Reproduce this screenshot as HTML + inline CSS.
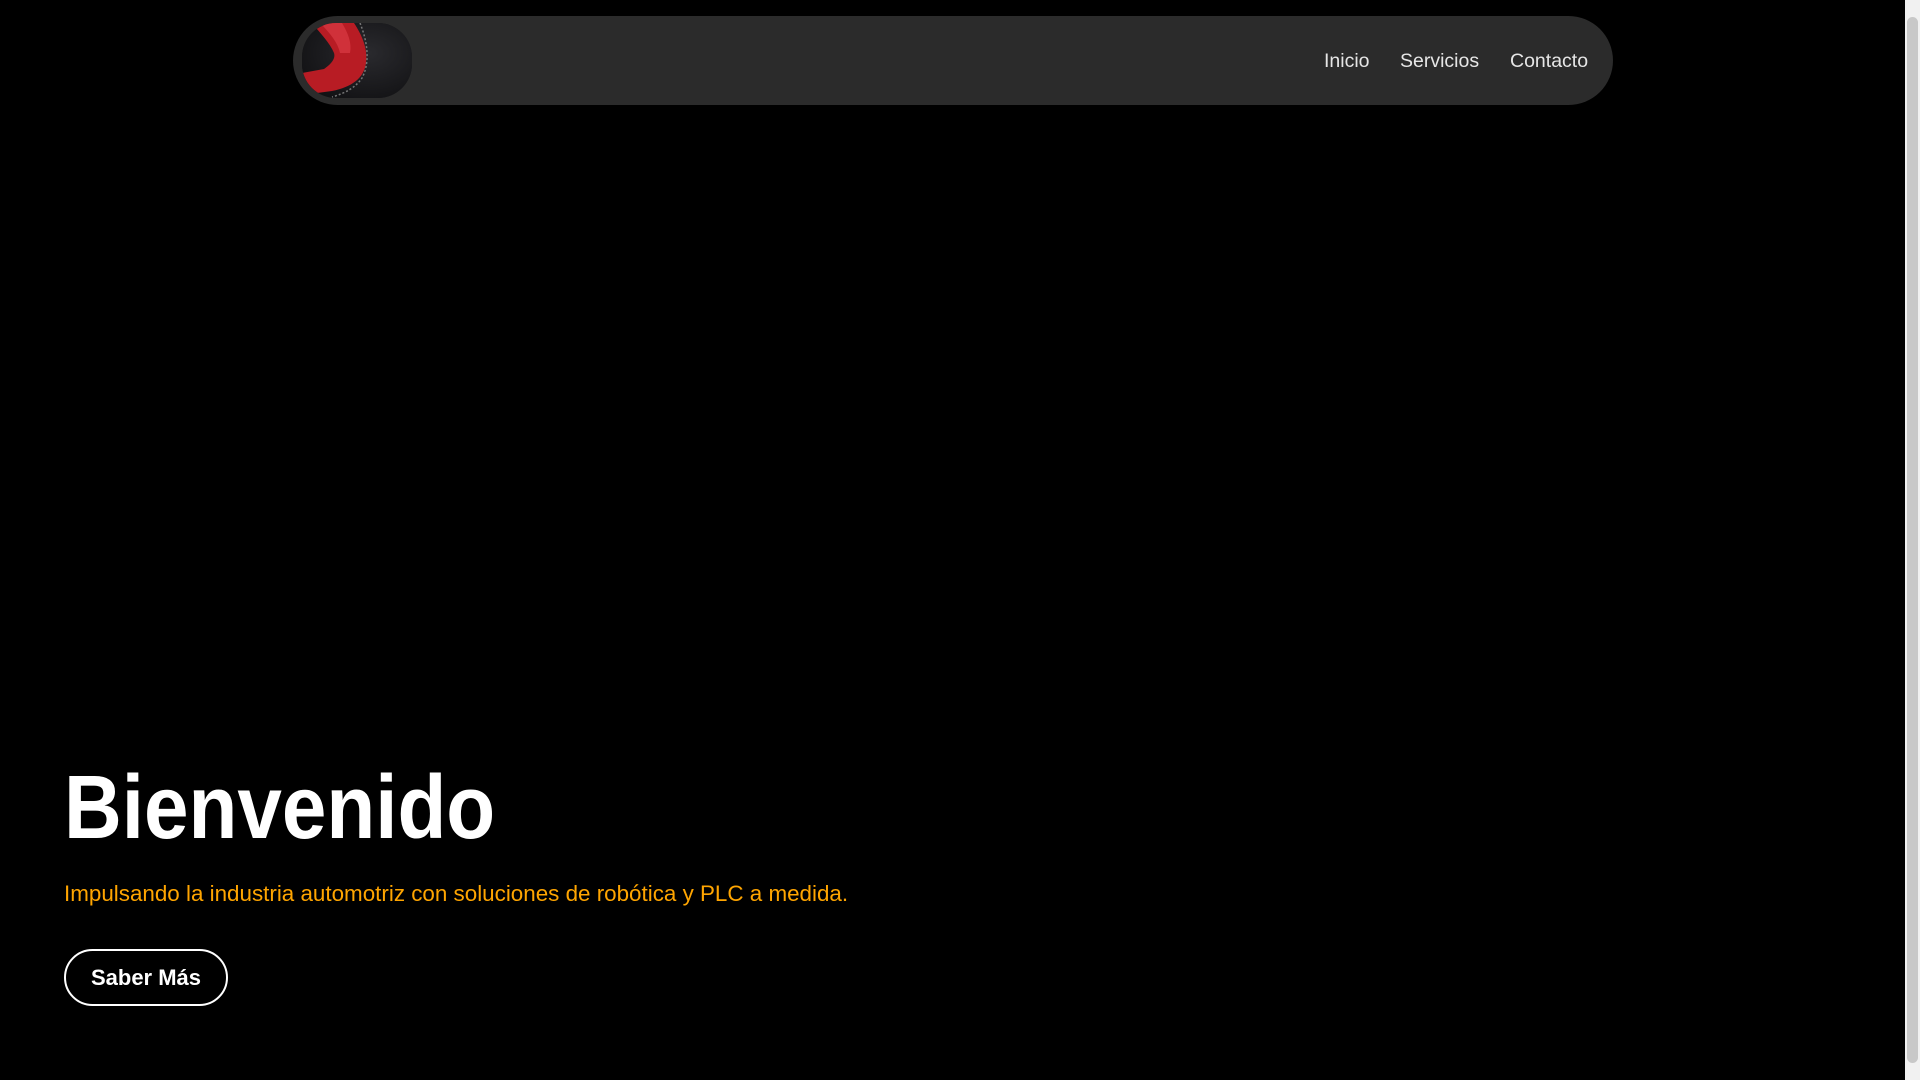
<!DOCTYPE html>
<html><head><meta charset="utf-8"><style>
html,body{margin:0;padding:0;width:1920px;height:1080px;background:#000;overflow:hidden;font-family:"Liberation Sans",Arial,sans-serif}
.nav{position:absolute;left:293px;top:16px;width:1320px;height:89px;background:#2b2b2b;border-radius:45px}
.logo{position:absolute;left:302px;top:23px;width:110px;height:75px;border-radius:34px;overflow:hidden;background:#161618}
.links{position:absolute;top:50px;font-size:19.5px;color:#e6e6e6}
h1{position:absolute;left:64px;top:771px;margin:0;font-size:80px;font-weight:bold;color:#fff;line-height:80px;transform:scaleY(1.13);transform-origin:0 68px}
.sub{position:absolute;left:64px;top:881px;font-size:22.4px;color:#ffa500}
.btn{position:absolute;left:64px;top:949px;width:160px;height:53px;border:2px solid #fff;border-radius:29px;color:#fff;font-weight:bold;font-size:22px;text-align:center;line-height:53px}
.sb{position:absolute;left:1905px;top:0;width:15px;height:1080px;background:#f1f1f1}
.th{position:absolute;left:1907px;top:17px;width:11px;height:1046px;background:#c8c8c8;border-radius:6px}
</style></head><body>
<div class="nav"></div>
<div class="logo"><svg width="110" height="75" viewBox="0 0 110 75">
<defs><radialGradient id="g" cx="0.6" cy="0.4" r="0.8"><stop offset="0" stop-color="#2a2a2e"/><stop offset="1" stop-color="#0e0e10"/></radialGradient></defs>
<rect width="110" height="75" fill="url(#g)"/>
<path d="M10 0 L52 0 C60 12 66 26 64 40 C62 55 50 64 30 68 L0 72 L0 50 L22 46 C28 42 34 36 32 30 C28 20 18 10 10 0Z" fill="#b81c24"/>
<path d="M18 0 L40 0 C46 10 50 20 48 30 L38 30 C36 20 28 10 18 0Z" fill="#e0404a" opacity="0.6"/>
<path d="M58 0 C66 20 68 40 60 55 C54 64 44 70 30 74" stroke="#777" stroke-width="1.5" fill="none" stroke-dasharray="2 2"/>
</svg></div>
<div class="links" style="left:1324px">Inicio</div>
<div class="links" style="left:1400px">Servicios</div>
<div class="links" style="left:1510px">Contacto</div>
<h1>Bienvenido</h1>
<div class="sub">Impulsando la industria automotriz con soluciones de robótica y PLC a medida.</div>
<div class="btn">Saber Más</div>
<div class="sb"></div><div class="th"></div>
</body></html>
